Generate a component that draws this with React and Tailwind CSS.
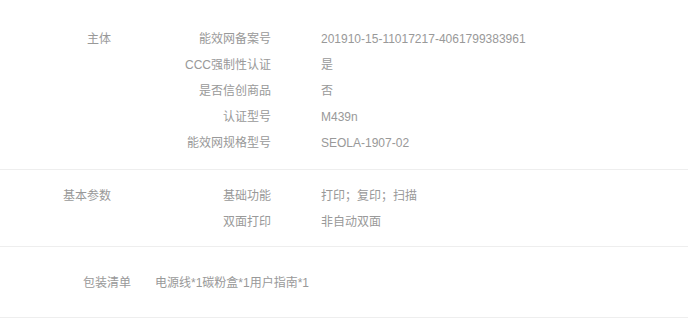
import React from "react";

const groups = [
  {
    title: "主体",
    items: [
      ["能效网备案号", "201910-15-11017217-4061799383961"],
      ["CCC强制性认证", "是"],
      ["是否信创商品", "否"],
      ["认证型号", "M439n"],
      ["能效网规格型号", "SEOLA-1907-02"],
    ],
    pad: "pt-[26px] pb-[13px]",
  },
  {
    title: "基本参数",
    items: [
      ["基础功能", "打印；复印；扫描"],
      ["双面打印", "非自动双面"],
    ],
    pad: "pt-[13px] pb-[11px]",
  },
];

const ParamGroup = ({ title, items, pad }) => (
  <div className={`flex border-b border-[#eeeeee] ${pad}`}>
    <div className="w-[111px] shrink-0 text-right leading-[26px]">{title}</div>
    <div className="flex flex-col">
      {items.map(([key, value]) => (
        <div key={key} className="flex leading-[26px]">
          <div className="w-[160px] shrink-0 text-right">{key}</div>
          <div className="pl-[50px]">{value}</div>
        </div>
      ))}
    </div>
  </div>
);

const App = () => {
  return (
    <div
      className="w-[688px] h-[318px] bg-white text-[12px] text-[#999999]"
      style={{ fontFamily: '"Liberation Sans", "Noto Sans CJK SC", sans-serif' }}
    >
      {groups.map((g) => (
        <ParamGroup key={g.title} {...g} />
      ))}
      <div className="flex pt-[23px] pb-[21px] border-b border-[#eeeeee] leading-[26px]">
        <div className="w-[131px] shrink-0 text-right">包装清单</div>
        <div className="pl-[24px]">电源线*1碳粉盒*1用户指南*1</div>
      </div>
    </div>
  );
};

export default App;
